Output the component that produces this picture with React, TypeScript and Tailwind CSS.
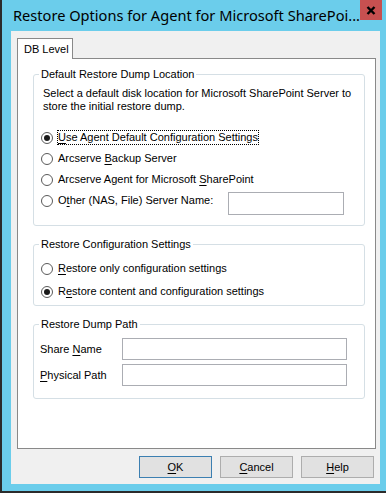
import { ReactNode } from "react";

function U({ children }: { children: ReactNode }) {
  return <span className="underline underline-offset-[2px]">{children}</span>;
}

function Radio({ checked }: { checked?: boolean }) {
  return (
    <span className="w-[12px] h-[12px] rounded-full border border-[#5a5a5a] bg-white flex items-center justify-center shrink-0">
      {checked && <span className="w-[6px] h-[6px] rounded-full bg-[#1a1a1a]" />}
    </span>
  );
}

function RadioRow({
  checked,
  focused,
  children,
}: {
  checked?: boolean;
  focused?: boolean;
  children: ReactNode;
}) {
  return (
    <div className="flex items-center gap-[4px] h-[21px]">
      <Radio checked={checked} />
      <span
        className={`leading-[13px] border border-dotted ${
          focused ? "border-black" : "border-transparent"
        }`}
      >
        {children}
      </span>
    </div>
  );
}

function Group({
  title,
  className,
  children,
}: {
  title: string;
  className?: string;
  children: ReactNode;
}) {
  return (
    <div
      className={`relative ml-[15px] w-[332px] border border-[#d5dfe5] rounded-[3px] ${className ?? ""}`}
    >
      <span className="absolute -top-[7px] left-[5px] px-[2px] bg-white leading-[13px]">
        {title}
      </span>
      {children}
    </div>
  );
}

function Button({ primary, children }: { primary?: boolean; children: ReactNode }) {
  return (
    <button
      className={`w-[73px] h-[22px] bg-[#e1e1e1] border ${
        primary ? "border-[#3c7fb1]" : "border-[#adadad]"
      } flex items-center justify-center leading-[13px]`}
    >
      {children}
    </button>
  );
}

export default function App() {
  return (
    <div className="w-[386px] h-[493px] bg-[#6bcdeb] border-l-2 border-b-2 border-[#2b2b2b] flex flex-col font-['Liberation_Sans',Arial,sans-serif] text-[11px] text-black">
      {/* title bar */}
      <div className="h-[31px] flex items-start shrink-0">
        <div className="pl-[11px] pt-[5px] font-['Noto_Sans',sans-serif] text-[14.6px] leading-[20px] whitespace-nowrap">
          Restore Options for Agent for Microsoft SharePoi...
        </div>
        <div className="ml-auto mr-[4px] w-[33px] h-[20px] bg-[#c75050] flex items-center justify-center">
          <svg width="10" height="9" viewBox="0 0 10 9">
            <path d="M1.5 1 L8.5 8 M8.5 1 L1.5 8" stroke="#000" strokeWidth="2.4" />
          </svg>
        </div>
      </div>

      {/* dialog body */}
      <div className="ml-[9px] mr-[6px] h-[453px] bg-[#f0f0f0] flex flex-col shrink-0">
        <div className="pt-[7px] pl-[6px] flex">
          <div className="relative z-10 -mb-px w-[56px] h-[21px] bg-white border border-b-0 border-[#898989] pl-[6px] flex items-center leading-[13px]">
            DB Level
          </div>
        </div>

        <div className="ml-[6px] w-[359px] h-[391px] bg-white border border-[#898989] flex flex-col">
          <Group title="Default Restore Dump Location" className="mt-[15px] pt-[12px] pb-[14px]">
            <p className="pl-[9px] leading-[13px]">
              Select a default disk location for Microsoft SharePoint Server to
              <br />
              store the initial restore dump.
            </p>
            <div className="mt-[14px] pl-[7px] flex flex-col">
              <RadioRow checked focused>
                <U>U</U>se Agent Default Configuration Settings
              </RadioRow>
              <RadioRow>
                Arcserve <U>B</U>ackup Server
              </RadioRow>
              <RadioRow>
                Arcserve Agent for Microsoft <U>S</U>harePoint
              </RadioRow>
              <div className="flex items-start h-[21px]">
                <RadioRow>
                  O<U>t</U>her (NAS, File) Server Name:
                </RadioRow>
                <input className="ml-auto mr-[20px] mt-[2px] w-[116px] h-[23px] border border-[#abadb3] bg-white outline-none" />
              </div>
            </div>
          </Group>

          <Group title="Restore Configuration Settings" className="mt-[18px] pt-[13px] pb-[3px] pl-[7px] flex flex-col gap-[2px]">
            <RadioRow>
              <U>R</U>estore only configuration settings
            </RadioRow>
            <RadioRow checked>
              R<U>e</U>store content and configuration settings
            </RadioRow>
          </Group>

          <Group title="Restore Dump Path" className="mt-[18px] pt-[13px] pb-[12px] pl-[6px] flex flex-col gap-[4px]">
            <div className="flex items-center h-[22px]">
              <span className="w-[82px] leading-[13px]">
                Share <U>N</U>ame
              </span>
              <input className="w-[225px] h-[22px] border border-[#abadb3] bg-white outline-none" />
            </div>
            <div className="flex items-center h-[22px]">
              <span className="w-[82px] leading-[13px]">
                <U>P</U>hysical Path
              </span>
              <input className="w-[225px] h-[22px] border border-[#abadb3] bg-white outline-none" />
            </div>
          </Group>
        </div>

        <div className="mt-[7px] pr-[6px] flex justify-end gap-[8px]">
          <Button primary>
            <U>O</U>K
          </Button>
          <Button>
            <U>C</U>ancel
          </Button>
          <Button>
            <U>H</U>elp
          </Button>
        </div>
      </div>
    </div>
  );
}
